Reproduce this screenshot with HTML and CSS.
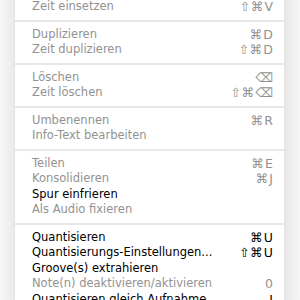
FILE: index.html
```html
<!DOCTYPE html>
<html>
<head>
<meta charset="utf-8">
<link rel="stylesheet" href="styles.css">
</head>
<body>
<div class="menu">
  <div class="item off"><span>Zeit einsetzen</span><span class="key">⇧⌘V</span></div>
  <div class="sep"></div>
  <div class="item off"><span>Duplizieren</span><span class="key">⌘D</span></div>
  <div class="item off"><span>Zeit duplizieren</span><span class="key">⇧⌘D</span></div>
  <div class="sep"></div>
  <div class="item off"><span>Löschen</span><span class="key">⌫</span></div>
  <div class="item off"><span>Zeit löschen</span><span class="key">⇧⌘⌫</span></div>
  <div class="sep"></div>
  <div class="item off"><span>Umbenennen</span><span class="key">⌘R</span></div>
  <div class="item off"><span>Info-Text bearbeiten</span><span class="key"></span></div>
  <div class="sep"></div>
  <div class="item off"><span>Teilen</span><span class="key">⌘E</span></div>
  <div class="item off"><span>Konsolidieren</span><span class="key">⌘J</span></div>
  <div class="item"><span>Spur einfrieren</span><span class="key"></span></div>
  <div class="item off"><span>Als Audio fixieren</span><span class="key"></span></div>
  <div class="sep"></div>
  <div class="item"><span>Quantisieren</span><span class="key">⌘U</span></div>
  <div class="item"><span>Quantisierungs-Einstellungen...</span><span class="key">⇧⌘U</span></div>
  <div class="item"><span>Groove(s) extrahieren</span><span class="key"></span></div>
  <div class="item off"><span>Note(n) deaktivieren/aktivieren</span><span class="key">0</span></div>
  <div class="item"><span>Quantisieren gleich Aufnahme</span><span class="key">I</span></div>
</div>
</body>
</html>
```
FILE: styles.css
```css
html, body {
  margin: 0;
  padding: 0;
  height: 300px;
  overflow: hidden;
}
body {
  background: linear-gradient(to right, #f6f6f6 0px, #ececec 13px, #e2e2e2 15px, #ffffff 15px, #ffffff 284px, #e4e4e4 284px, #eeeeee 290px, #f6f6f6 300px);
  font-family: "DejaVu Sans", sans-serif;
  font-size: 11.5px;
}
.menu {
  margin: -1px 16px 0 15px;
  background: #fff;
  padding: 0 11px 0 17px;
}
.item {
  display: flex;
  justify-content: space-between;
  height: 15.5px;
  line-height: 15.5px;
  color: #000;
  white-space: nowrap;
}
.item.off {
  color: #929292;
}
.key {
  font-size: 12.5px;
  letter-spacing: 1px;
  margin-right: -1px;
}
.sep {
  height: 12px;
  margin: 0 -11px 0 -17px;
  background: linear-gradient(#fff 5px, #e8e8e8 5px, #e8e8e8 7px, #fff 7px);
}
```
